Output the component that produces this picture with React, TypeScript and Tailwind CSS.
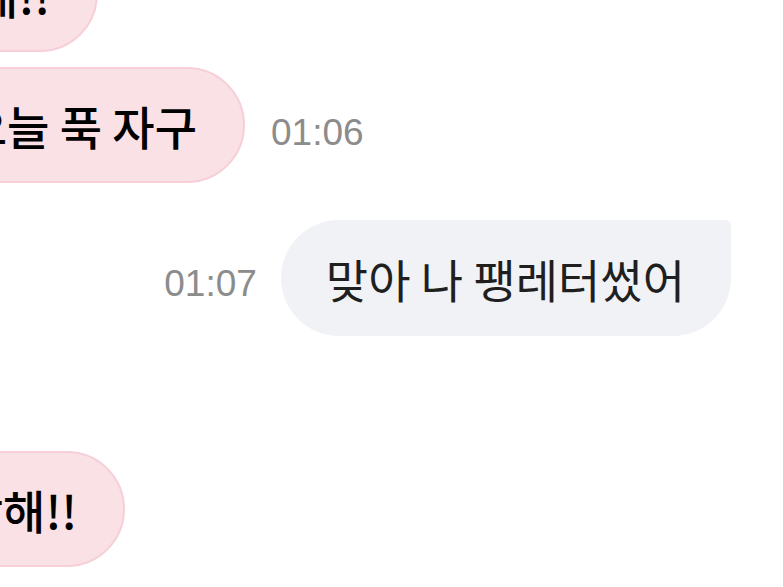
import { ReactNode } from 'react';

const korean = { fontFamily: '"Noto Sans CJK KR", "Noto Sans", sans-serif' };
const latin = { fontFamily: '"Liberation Sans", Arial, sans-serif' };

type TBubbleProps = {
  children: ReactNode;
  edge: string;
  time?: string;
};

// received message, bubble is anchored by its right edge and may run off the left side
const Received = ({ children, edge, time }: TBubbleProps) => {
  return (
    <div className="flex items-center">
      <div className={`${edge} flex justify-end shrink-0`}>
        <div
          className="h-[116px] shrink-0 whitespace-nowrap rounded-full border-2 border-[#f6cfd8] bg-[#fae1e6] pl-12 pr-[46px] flex items-center text-[46px] font-medium text-black"
          style={korean}>
          {children}
        </div>
      </div>
      {time && (
        <span className="ml-[26px] mt-4 text-[37px] text-[#8c8c8c]" style={latin}>
          {time}
        </span>
      )}
    </div>
  );
};

const Sent = ({ children, time }: { children: ReactNode; time: string }) => {
  return (
    <div className="flex items-center justify-end pr-[52px]">
      <span className="mr-[24px] mt-3 text-[37px] text-[#8c8c8c]" style={latin}>
        {time}
      </span>
      <div
        className="h-[116px] whitespace-nowrap rounded-[58px] rounded-tr-[6px] bg-[#f1f2f6] pl-[45px] pr-[46px] flex items-center text-[46px] text-[#1f1f1f]"
        style={korean}>
        {children}
      </div>
    </div>
  );
};

export default function App() {
  return (
    <div className="w-[783px] h-[587px] overflow-hidden bg-white">
      <div className="-mt-[64px] flex flex-col">
        <Received edge="w-[98px]">수고해!!</Received>
        <div className="h-[15px]" />
        <Received edge="w-[245px]" time="01:06">
          너도 오늘 푹 자구
        </Received>
        <div className="h-[37px]" />
        <Sent time="01:07">맞아 나 팽레터썼어</Sent>
        <div className="h-[115px]" />
        <Received edge="w-[125px]">사랑해!!</Received>
      </div>
    </div>
  );
}
